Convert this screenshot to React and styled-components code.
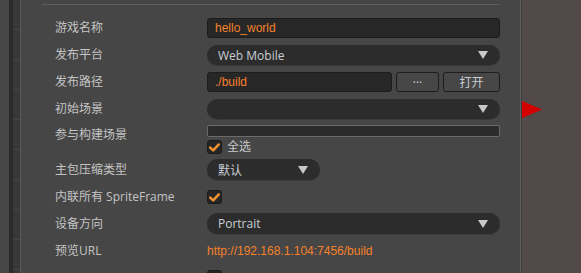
import React from "react";
import styled, { createGlobalStyle } from "styled-components";

const GlobalStyle = createGlobalStyle`
    html, body {
        margin: 0;
        padding: 0;
        background: #464646;
    }
    * {
        box-sizing: border-box;
    }
`;

const latin = `"Open Sans", "Noto Sans CJK SC", sans-serif`;
const orange = "#f5812b";

const Screen = styled.div`
    display: flex;
    width: 581px;
    height: 273px;
    overflow: hidden;
    background: #464646;
    font-family: ${latin};
    font-size: 12px;
    color: #c6c6c6;
`;

const Gutter = styled.div`
    width: 21px;
    flex: none;
    display: flex;
`;

const GutterStripe = styled.div`
    width: ${({w}) => w}px;
    background: ${({bg}) => bg};
`;

const Ruler = styled.div`
    width: 7px;
    background-color: #383838;
    background-image: repeating-linear-gradient(
        to bottom,
        transparent 0,
        transparent 29px,
        #444 29px,
        #444 30px
    );
`;

const Panel = styled.div`
    width: 499px;
    flex: none;
    display: flex;
    flex-direction: column;
    overflow: hidden;
`;

const HeaderLine = styled.div`
    flex: none;
    height: 5px;
    margin: 0 20px 0 21px;
    border-bottom: 1px solid #5d5d5d;
`;

const Form = styled.div`
    flex: none;
    display: flex;
    flex-direction: column;
    padding: 13px 20px 0 34px;
`;

const Row = styled.div`
    flex: none;
    display: flex;
    align-items: ${({top}) => (top ? "flex-start" : "center")};
    min-height: 20px;
    margin-bottom: ${({mb}) => (mb === undefined ? 7 : mb)}px;
`;

const Label = styled.div`
    width: 152px;
    flex: none;
    line-height: 20px;
    white-space: nowrap;
    color: #c4c4c4;
`;

const Field = styled.div`
    flex: 1;
    display: flex;
    flex-direction: ${({column}) => (column ? "column" : "row")};
    gap: ${({gap}) => gap || 0}px;
`;

const TextInput = styled.div`
    flex: 1;
    height: 20px;
    padding: 0 7px;
    display: flex;
    align-items: center;
    background: #272727;
    border: 1px solid #1c1c1c;
    border-radius: 3px;
    font-family: "Liberation Sans", Arial, sans-serif;
    color: ${orange};
`;

const Select = styled.div`
    ${({w}) => (w ? `width: ${w}px;` : "flex: 1;")}
    height: ${({h}) => h || 20}px;
    padding: 0 12px 0 11px;
    display: flex;
    align-items: center;
    justify-content: space-between;
    background: #2c2c2c;
    border-radius: 11px;
    box-shadow: 0 1px 0 #3a3a3a;
    color: #c9ced4;
`;

const Arrow = styled.span`
    width: 0;
    height: 0;
    border-left: 5px solid transparent;
    border-right: 5px solid transparent;
    border-top: 8px solid #c8c8c8;
`;

const Button = styled.div`
    width: ${({w}) => w}px;
    height: 20px;
    display: flex;
    align-items: center;
    justify-content: center;
    background: #474747;
    border: 1px solid #1d1d1d;
    border-radius: 3px;
    color: #c7ccd2;
`;

const ListBox = styled.div`
    height: 12px;
    background: #2b2b2b;
    border: 1px solid #6a6a6a;
    border-radius: 2px;
`;

const CheckLine = styled.label`
    display: flex;
    align-items: center;
    gap: 5px;
    line-height: 14px;
`;

const Box = styled.span`
    width: 15px;
    height: 14px;
    flex: none;
    display: flex;
    align-items: center;
    justify-content: center;
    background: #262626;
    border: 1px solid #1a1a1a;
    border-radius: 3px;
`;

const Link = styled.span`
    color: ${orange};
    font-family: "Liberation Sans", Arial, sans-serif;
`;

const Divider = styled.div`
    width: 2px;
    flex: none;
    background: linear-gradient(to right, #5e5e5e 0 1px, #3c3c3c 1px 2px);
`;

const Viewport = styled.div`
    flex: 1;
    background: #524a49;
    padding-top: 101px;
`;

const Check = () => (
    <svg width="11" height="9" viewBox="0 0 11 9">
        <path d="M1.2 4.6 L4.2 7.4 L9.8 1.4" fill="none" stroke="#f59331" strokeWidth="2.4" strokeLinecap="round" strokeLinejoin="round" />
    </svg>
);

const Checkbox = ({ checked, children }) => (
    <CheckLine>
        <Box>{checked && <Check />}</Box>
        {children}
    </CheckLine>
);

const Gizmo = () => (
    <svg width="20" height="17" viewBox="0 0 20 17" style={{ display: "block" }}>
        <polygon points="0,0 20,8.5 0,17" fill="#d40000" />
    </svg>
);

export default function App() {
    return (
        <>
            <GlobalStyle />
            <Screen>
                <Gutter>
                    <GutterStripe w={9} bg="#474747" />
                    <GutterStripe w={4} bg="#2b2b2b" />
                    <Ruler />
                    <GutterStripe w={1} bg="#5a5a5a" />
                </Gutter>
                <Panel>
                    <HeaderLine />
                    <Form>
                        <Row>
                            <Label>游戏名称</Label>
                            <Field><TextInput>hello_world</TextInput></Field>
                        </Row>
                        <Row>
                            <Label>发布平台</Label>
                            <Field><Select>Web Mobile<Arrow /></Select></Field>
                        </Row>
                        <Row>
                            <Label>发布路径</Label>
                            <Field gap={4}>
                                <TextInput>./build</TextInput>
                                <Button w={43}>···</Button>
                                <Button w={57}>打开</Button>
                            </Field>
                        </Row>
                        <Row mb={6}>
                            <Label>初始场景</Label>
                            <Field><Select><span /><Arrow /></Select></Field>
                        </Row>
                        <Row top mb={5}>
                            <Label>参与构建场景</Label>
                            <Field column gap={3}>
                                <ListBox />
                                <Checkbox checked>全选</Checkbox>
                            </Field>
                        </Row>
                        <Row>
                            <Label>主包压缩类型</Label>
                            <Field><Select w={113} h={21}>默认<Arrow /></Select></Field>
                        </Row>
                        <Row mb={6}>
                            <Label>内联所有 SpriteFrame</Label>
                            <Field><Checkbox checked /></Field>
                        </Row>
                        <Row>
                            <Label>设备方向</Label>
                            <Field><Select h={21}>Portrait<Arrow /></Select></Field>
                        </Row>
                        <Row mb={6}>
                            <Label>预览URL</Label>
                            <Field><Link>http://192.168.1.104:7456/build</Link></Field>
                        </Row>
                        <Row>
                            <Label />
                            <Field><Checkbox /></Field>
                        </Row>
                    </Form>
                </Panel>
                <Divider />
                <Viewport>
                    <Gizmo />
                </Viewport>
            </Screen>
        </>
    );
}
